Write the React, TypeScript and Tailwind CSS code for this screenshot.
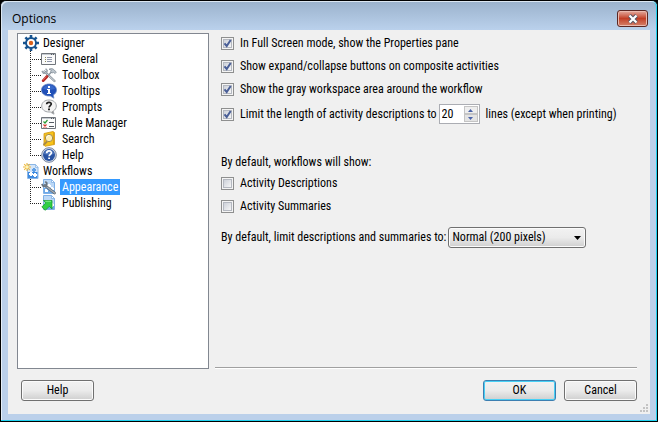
import { useState, type ReactNode } from "react";
import clsx from "clsx";

type Item = { id: string; label: string; icon: ReactNode };
type Group = { label: string; icon: ReactNode; items: Item[] };

function Icon({ children }: { children: ReactNode }) {
  return (
    <svg viewBox="0 0 16 16" className="size-4 shrink-0" aria-hidden="true">
      {children}
    </svg>
  );
}

function GearIcon() {
  return (
    <Icon>
      <g stroke="#17538f" strokeWidth="2.6">
        <path d="M8 0v16M0 8h16M2.4 2.4l11.2 11.2M13.6 2.4L2.4 13.6" />
      </g>
      <circle cx="8" cy="8" r="5" fill="#fff" stroke="#17538f" strokeWidth="1.9" />
      <circle cx="8" cy="8" r="2.2" fill="#d9601c" />
    </Icon>
  );
}

function GeneralIcon() {
  return (
    <Icon>
      <path d="M.5 2.5h14v11H.5z" fill="#fafafa" stroke="#70757b" />
      <path d="M1 3h13v1H1z" fill="#c5cad0" />
      <path d="M10 3h1v1h-1zM12 3h1v1h-1z" fill="#555b63" />
      <path d="M4 6.5h1M4 8.5h1M4 10.5h1" stroke="#8a8a58" />
      <path d="M6 6.5h5M6 8.5h5M6 10.5h5" stroke="#8f96aa" />
    </Icon>
  );
}

function ToolboxIcon() {
  return (
    <Icon>
      <path d="M3.5 4.5l10 9.5" stroke="#7d8791" strokeWidth="2.2" strokeLinecap="round" />
      <path d="M3.5 4.5l10 9.5" stroke="#e4e9ed" strokeWidth="1" strokeLinecap="round" />
      <path d="M1 4l1.5 2.2L5.3 6l.9-2.4L4.6 1.6" fill="none" stroke="#98a2ab" strokeWidth="1.5" />
      <path d="M6 9.5l4.5-4.5" stroke="#8d97a1" strokeWidth="1.6" />
      <path d="M2.2 13.6L6 9.5" stroke="#b82a26" strokeWidth="2.8" strokeLinecap="round" />
      <path d="M2.2 12.8l3-3.2" stroke="#ec7a70" strokeWidth=".8" />
      <path d="M8 2.2c2-1 3.8-.7 5.3.8l2 2.2-1.2 1.4-1.6-1.2-1.4.6-1.5-1.6.8-1z" fill="#bcc5cd" stroke="#7a858f" strokeWidth=".7" />
    </Icon>
  );
}

function TooltipsIcon() {
  return (
    <Icon>
      <path d="M8 1c4.3 0 7.5 2.5 7.5 6 0 2.2-1.2 4-3.2 5l.6 3.2L9.3 13H8C3.7 13 .5 10.5.5 7S3.7 1 8 1z" fill="#2050b8" stroke="#6d8cc4" strokeWidth=".8" />
      <path d="M2 6c.5-2.5 3-4 6-4s5.5 1.5 6 4c-3 1-9 1-12 0z" fill="#4d80da" opacity=".5" />
      <path d="M7 3h2v2H7zM6 6h3v4h1v1H6v-1h1V7H6z" fill="#fff" />
    </Icon>
  );
}

function PromptsIcon() {
  return (
    <Icon>
      <path d="M8 1c4.3 0 7.3 2.5 7.3 6 0 2.2-1.2 4-3.1 5l.8 3.2L9.3 13H8C3.7 13 .7 10.5.7 7S3.7 1 8 1z" fill="#f4f4f4" stroke="#a0a4a8" />
      <path d="M11.5 12l1 2.5-2-1.5z" fill="#777" />
      <path d="M5.7 5.3C5.7 2.8 10.3 2.7 10.3 5.1c0 1.5-2.2 1.6-2.2 3.4" fill="none" stroke="#222" strokeWidth="1.7" />
      <path d="M7 9.5h2v1.7H7z" fill="#222" />
    </Icon>
  );
}

function RulesIcon() {
  return (
    <Icon>
      <path d="M.5 2.5h14v11H.5z" fill="#fdfdfd" stroke="#70757b" />
      <path d="M1 3h13v1H1z" fill="#c5cad0" />
      <path d="M10 3h1v1h-1zM12 3h1v1h-1z" fill="#555b63" />
      <path d="M2.5 6.5L4 8l2.5-3" fill="none" stroke="#2c9a35" strokeWidth="1.2" />
      <path d="M2.5 9.5l3 3M5.5 9.5l-3 3" stroke="#d8382f" strokeWidth="1.2" />
      <path d="M8 7.5h5M8 11.5h5" stroke="#555b63" />
    </Icon>
  );
}

function SearchIcon() {
  return (
    <Icon>
      <path d="M3 2.5L12 .5l1.5 1v12L4 15.3l-1-1z" fill="#f8c419" stroke="#cf9511" strokeWidth=".8" />
      <path d="M12.5 1v12.5" stroke="#e0a410" />
      <path d="M6 10.5L3 13.5" stroke="#a98a44" strokeWidth="1.8" strokeLinecap="round" />
      <circle cx="8" cy="7" r="3.7" fill="#fdeeb4" stroke="#a58c4c" strokeWidth="1" />
      <path d="M5.8 6.5c.4-1.3 1.3-2 2.5-2" fill="none" stroke="#fff" />
    </Icon>
  );
}

function HelpIcon() {
  return (
    <Icon>
      <circle cx="8" cy="8" r="7.3" fill="#d5ddea" stroke="#77869f" />
      <circle cx="8" cy="8" r="6" fill="#2953a3" />
      <path d="M3 7c.4-2.7 2.5-4.3 5-4.3s4.6 1.6 5 4.3c-3 1-7 1-10 0z" fill="#6c91cf" opacity=".6" />
      <path d="M5.7 6.2c0-3 4.7-2.9 4.7-.4 0 1.7-2.3 1.6-2.3 3.4" fill="none" stroke="#fff" strokeWidth="1.7" />
      <path d="M7.2 10.4H9v1.7H7.2z" fill="#fff" />
    </Icon>
  );
}

// Blue page with small gears, shared by the child workflow icons
function WorkflowPage() {
  return (
    <>
      <path d="M2.5.5h8l3 3v11h-11z" fill="#bcd8f6" stroke="#7fb0e6" />
      <path d="M3 9h10v5H3z" fill="#6ba8e8" />
      <path d="M10.5.5v3h3z" fill="#fff" stroke="#7fb0e6" strokeWidth=".8" />
      <g fill="#fff">
        <path d="M7 5h2v1h1v2H9v1H7V8H6V6h1z" />
        <path d="M10 8h2v1h1v2h-1v1h-2v-1H9V9h1z" />
        <path d="M4 10h2v1h1v2H4z" />
      </g>
    </>
  );
}

function WorkflowsIcon() {
  return (
    <Icon>
      <path d="M4.5 1.5h8l2.5 3v11H4.5z" fill="#d3e5f9" stroke="#8bb6e6" />
      <path d="M5 9h9.5v6H5z" fill="#3f8be0" />
      <path d="M12.5 1.5v3H15z" fill="#fff" stroke="#8bb6e6" strokeWidth=".8" />
      <path d="M10 5h2v1h1v2h-1v1h-2V8H9V6h1z" fill="#5e9fe6" />
      <path d="M7 9h2v1h1v2H9v1H7v-1H6v-2h1zM11 10h2v1h1v2h-1v1h-2v-1h-1v-2h1z" fill="#fff" />
      <path d="M4 0v8M0 4h8M1.2 1.2l5.6 5.6M6.8 1.2L1.2 6.8" stroke="#edb63a" strokeWidth="1.1" />
      <circle cx="4" cy="4" r="1.7" fill="#fff4b5" />
    </Icon>
  );
}

function AppearanceIcon() {
  return (
    <Icon>
      <WorkflowPage />
      <path d="M4 6.5l9.5 7.5" stroke="#59636d" strokeWidth="2.8" strokeLinecap="round" />
      <path d="M4 6.5l9.5 7.5" stroke="#a4adb5" strokeWidth="1.4" strokeLinecap="round" />
      <path d="M.8 5L2.3 7.3l3-.4.5-2.8L4.3 2.5" fill="none" stroke="#69737d" strokeWidth="1.8" />
    </Icon>
  );
}

function PublishingIcon() {
  return (
    <Icon>
      <WorkflowPage />
      <path d="M2.5 5.5H11V14l-2.7-2.7-4 4L.8 12l4-4z" fill="#2fcf45" stroke="#199a30" strokeWidth=".8" />
      <path d="M4.3 6.3h5.8" stroke="#98ee9f" strokeWidth=".8" />
    </Icon>
  );
}

const GROUPS: Group[] = [
  {
    label: "Designer",
    icon: <GearIcon />,
    items: [
      { id: "general", label: "General", icon: <GeneralIcon /> },
      { id: "toolbox", label: "Toolbox", icon: <ToolboxIcon /> },
      { id: "tooltips", label: "Tooltips", icon: <TooltipsIcon /> },
      { id: "prompts", label: "Prompts", icon: <PromptsIcon /> },
      { id: "rules", label: "Rule Manager", icon: <RulesIcon /> },
      { id: "search", label: "Search", icon: <SearchIcon /> },
      { id: "help", label: "Help", icon: <HelpIcon /> },
    ],
  },
  {
    label: "Workflows",
    icon: <WorkflowsIcon />,
    items: [
      { id: "appearance", label: "Appearance", icon: <AppearanceIcon /> },
      { id: "publishing", label: "Publishing", icon: <PublishingIcon /> },
    ],
  },
];

function Branch({ last }: { last: boolean }) {
  return (
    <svg width="11" height="16" className="shrink-0" shapeRendering="crispEdges" aria-hidden="true">
      <path d={last ? "M.5 0v9" : "M.5 0v16"} stroke="#222" strokeDasharray="1 1" />
      <path d="M0 8.5h11" stroke="#222" strokeDasharray="1 1" />
    </svg>
  );
}

function OptionsTree({ selected, onSelect }: { selected: string; onSelect: (id: string) => void }) {
  return (
    <nav className="w-48 shrink-0 border border-[#828790] bg-white pt-px leading-4">
      <ul>
        {GROUPS.map((group) => (
          <li key={group.label}>
            <div className="flex h-4 items-center gap-0.5 pl-[5px]">
              {group.icon}
              <span className="px-0.5">{group.label}</span>
            </div>
            <ul>
              {group.items.map((item, i) => (
                <li key={item.id} className="flex h-4 items-center pl-3">
                  <Branch last={i === group.items.length - 1} />
                  <button type="button" onClick={() => onSelect(item.id)} className="flex items-center gap-[3px]">
                    {item.icon}
                    <span className={clsx("px-0.5", selected === item.id && "bg-[#3399ff] text-white")}>
                      {item.label}
                    </span>
                  </button>
                </li>
              ))}
            </ul>
          </li>
        ))}
      </ul>
    </nav>
  );
}

function CheckOption({ label, defaultChecked }: { label: string; defaultChecked?: boolean }) {
  return (
    <label className="flex items-center gap-1.5">
      <span className="grid size-[13px] shrink-0 place-items-center border border-[#8e8f8f] bg-[#f4f4f4]">
        <input
          type="checkbox"
          defaultChecked={defaultChecked}
          className="peer col-start-1 row-start-1 size-[9px] appearance-none border border-[#b4b8c0] bg-linear-to-br from-[#cdd1d9] to-[#f6f6f6]"
        />
        <svg viewBox="0 0 9 9" className="pointer-events-none invisible col-start-1 row-start-1 size-[9px] peer-checked:visible">
          <path d="M1.5 4.3L3.7 7 7.7 1" fill="none" stroke="#4a5f97" strokeWidth="2" />
        </svg>
      </span>
      {label}
    </label>
  );
}

function PushButton({ label, primary }: { label: string; primary?: boolean }) {
  return (
    <button
      type="button"
      className={clsx(
        "h-[21px] w-[73px] rounded-[3px] border bg-linear-to-b from-[#f2f2f2] from-0% via-[#ebebeb] via-50% to-[#cfcfcf] to-100%",
        primary
          ? "border-[#3c7fb1] shadow-[inset_0_0_0_1px_#48d0f5]"
          : "border-[#707070] shadow-[inset_0_0_0_1px_#fbfbfb]"
      )}
    >
      {label}
    </button>
  );
}

function LineCount() {
  const [lines, setLines] = useState(20);

  return (
    <span className="flex h-5 w-[41px] border border-[#abadb3] bg-white p-px">
      <input
        type="text"
        aria-label="Number of lines"
        value={lines}
        onChange={(e) => setLines(Number(e.target.value) || 0)}
        className="w-0 min-w-0 flex-1 pl-px outline-none"
      />
      <span className="flex w-3.5 flex-col">
        <button
          type="button"
          aria-label="More lines"
          onClick={() => setLines(lines + 1)}
          className="grid flex-1 place-items-center border border-[#c4c4c4] bg-[#eeeeee]"
        >
          <svg width="5" height="3"><path d="M0 3L2.5 0 5 3z" fill="#4a63a8" /></svg>
        </button>
        <button
          type="button"
          aria-label="Fewer lines"
          onClick={() => setLines(Math.max(0, lines - 1))}
          className="grid flex-1 place-items-center border border-[#c4c4c4] bg-[#e4e4e4]"
        >
          <svg width="5" height="3"><path d="M0 0h5L2.5 3z" fill="#4a63a8" /></svg>
        </button>
      </span>
    </span>
  );
}

function AppearancePage() {
  return (
    <section className="mb-px flex min-w-0 flex-1 flex-col border-b border-[#a0a0a0] pl-1.5 pt-1 shadow-[0_1px_0_#fff]">
      <div className="flex flex-col gap-2.5">
        <CheckOption label="In Full Screen mode, show the Properties pane" defaultChecked />
        <CheckOption label="Show expand/collapse buttons on composite activities" defaultChecked />
        <CheckOption label="Show the gray workspace area around the workflow" defaultChecked />
      </div>
      <div className="mt-2 flex items-center">
        <CheckOption label="Limit the length of activity descriptions to" defaultChecked />
        <span className="ml-0.5 mr-1.5"><LineCount /></span>
        lines (except when printing)
      </div>

      <p className="mt-8">By default, workflows will show:</p>
      <div className="mt-2 flex flex-col gap-2.5">
        <CheckOption label="Activity Descriptions" />
        <CheckOption label="Activity Summaries" />
      </div>

      <div className="mt-3.5 flex items-center gap-0.5">
        <label htmlFor="limit">By default, limit descriptions and summaries to:</label>
        <span className="grid items-center">
          <select
            id="limit"
            defaultValue="normal"
            className="col-start-1 row-start-1 h-[21px] w-[138px] appearance-none rounded-[3px] border border-[#707070] bg-linear-to-b from-[#f2f2f2] via-[#ebebeb] via-50% to-[#cfcfcf] pl-[3px] shadow-[inset_0_0_0_1px_#fbfbfb]"
          >
            <option value="small">Small (100 pixels)</option>
            <option value="normal">Normal (200 pixels)</option>
            <option value="large">Large (400 pixels)</option>
          </select>
          <svg width="7" height="4" className="pointer-events-none col-start-1 row-start-1 mr-[5px] justify-self-end">
            <path d="M0 0h7L3.5 4z" fill="#000" />
          </svg>
        </span>
      </div>
    </section>
  );
}

function App() {
  const [selected, setSelected] = useState("appearance");

  return (
    <div className="flex min-h-screen flex-col bg-black font-['Roboto_Condensed',Roboto,sans-serif] text-xs leading-[13px] text-black">
      <div className="flex flex-1 flex-col rounded-t-md border border-black bg-[#bbd0ea] shadow-[inset_-1px_-1px_0_#1fd2f0,inset_1px_1px_0_#e6eff8]">
        <header className="flex h-[29px] items-center justify-between rounded-t-md bg-linear-to-b from-[#9bb2cc] to-[#bad1ec] pl-[11px] pr-[9px] pt-1.5 shadow-[inset_1px_1px_0_#dce7f2,inset_-1px_0_0_#1fd2f0]">
          <h1 className="font-['Open_Sans',sans-serif] text-xs leading-4">Options</h1>
          <button
            type="button"
            aria-label="Close"
            className="grid h-[17px] w-[31px] place-items-center rounded-[3px] border border-[#5b2723] bg-linear-to-b from-[#e2aa9f] from-0% via-[#c23e25] via-50% to-[#d4806a] to-100% shadow-[inset_0_0_0_1px_#eab9ae]"
          >
            <svg width="12" height="10" viewBox="0 0 12 10">
              <path d="M2.5 1.5l7 7M9.5 1.5l-7 7" stroke="#535666" strokeWidth="4" />
              <path d="M2.5 1.5l7 7M9.5 1.5l-7 7" stroke="#fff" strokeWidth="2.2" />
            </svg>
          </button>
        </header>

        <main className="mx-[7px] mb-[7px] flex flex-1 flex-col bg-[#f0f0f0] pl-[9px] pr-[13px] pt-[3px]">
          <div className="flex flex-1 gap-1.5">
            <OptionsTree selected={selected} onSelect={setSelected} />
            <AppearancePage />
          </div>
          <footer className="flex gap-2 pb-[13px] pl-1 pt-[11px]">
            <PushButton label="Help" />
            <span className="flex-1" />
            <PushButton label="OK" primary />
            <PushButton label="Cancel" />
          </footer>
        </main>
      </div>

      <svg width="9" height="9" className="pointer-events-none absolute bottom-[9px] right-[9px]" shapeRendering="crispEdges" aria-hidden="true">
        <path d="M6 0h2v2H6zM3 3h2v2H3zM6 3h2v2H6zM0 6h2v2H0zM3 6h2v2H3zM6 6h2v2H6z" fill="#c3c3c3" />
      </svg>
    </div>
  );
}

export default App;
